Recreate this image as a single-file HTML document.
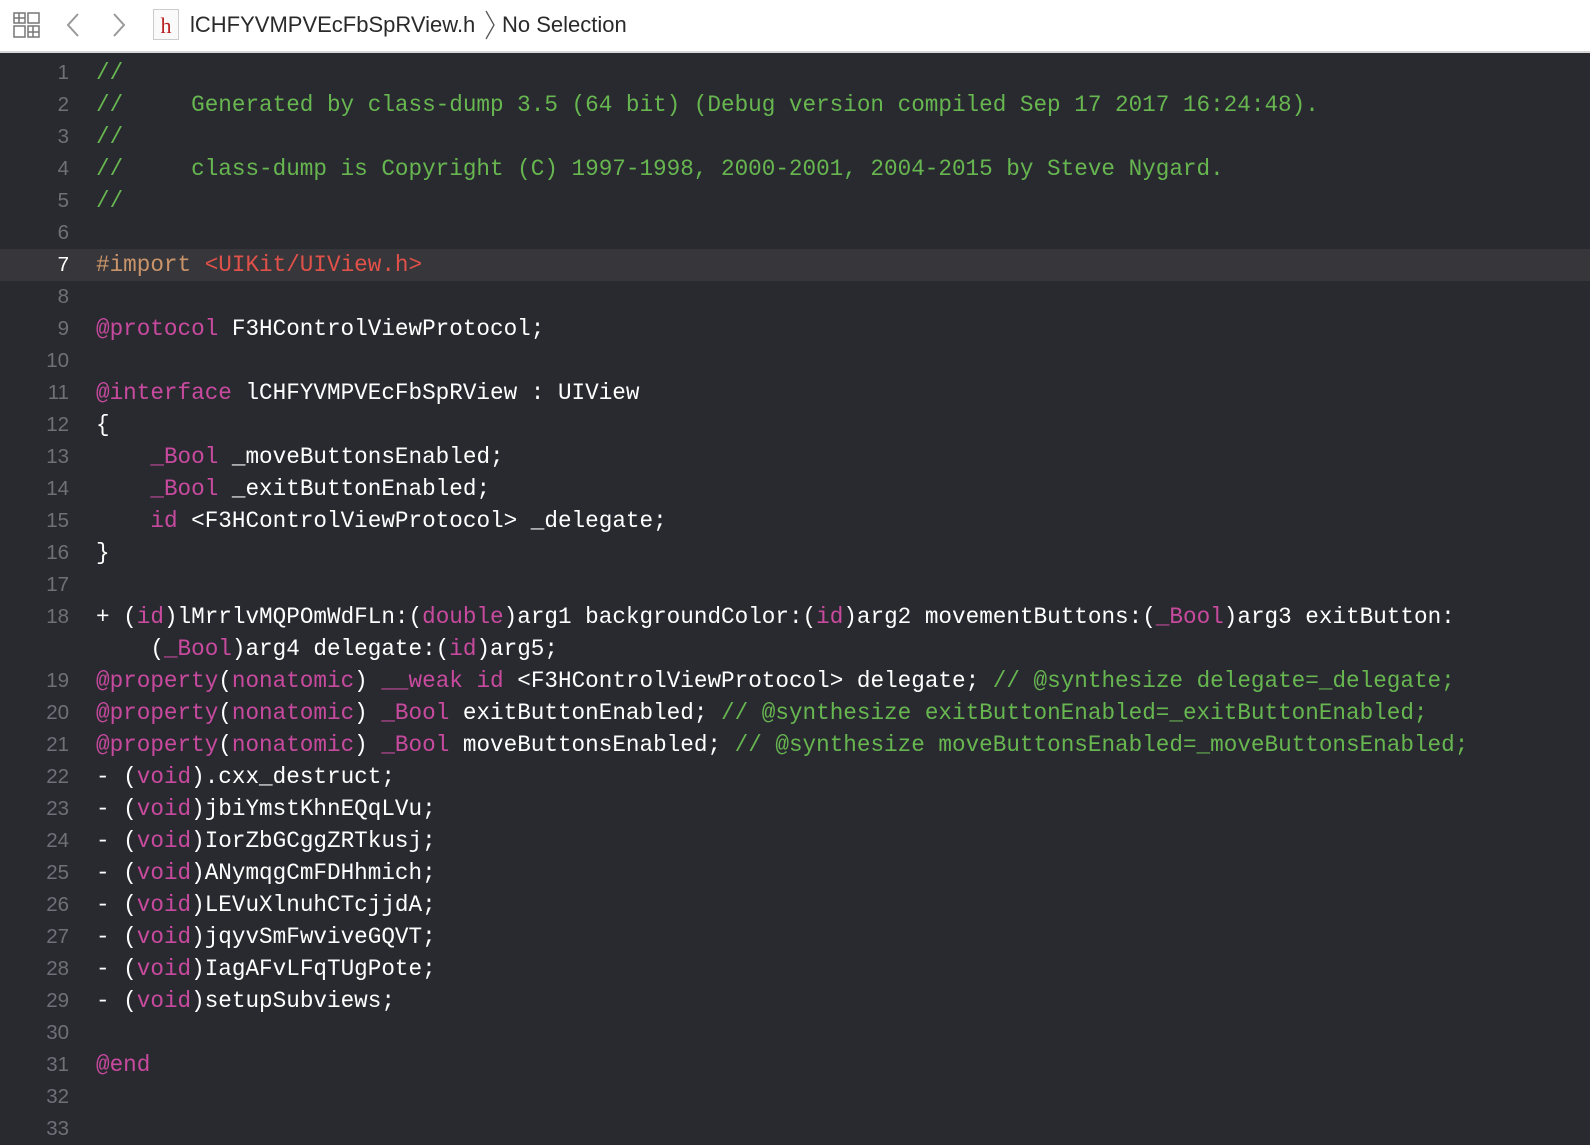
<!DOCTYPE html>
<html><head><meta charset="utf-8"><style>
*{margin:0;padding:0;box-sizing:border-box}
html,body{width:1590px;height:1144px;overflow:hidden}
body{background:#292a30;font-family:"Liberation Sans",sans-serif}
.top{position:absolute;left:0;top:0;width:1590px;height:53px;background:#fff;border-bottom:2px solid #d6d6d6}
.top .t{position:absolute;top:12px;font-size:22px;color:#2a2a2a;white-space:nowrap}
.code{position:absolute;left:0;top:57px;width:1590px;font-family:"Liberation Mono",monospace;font-size:22.65px;line-height:32px;color:#fff}
.l{position:relative;height:32px}
.l .n{position:absolute;left:0;width:69px;text-align:right;color:#6f7078;font-family:"Liberation Sans",sans-serif;font-size:20.5px}
.l .c{position:absolute;left:96px;white-space:pre}
.hl{background:#37363a}
.hl .n{color:#fff}
.k{color:#c84a9e}.g{color:#67b650}.p{color:#c9946a}.s{color:#e05149}
</style></head><body>
<div class="top">
<svg style="position:absolute;left:13px;top:12px" width="28" height="26" viewBox="0 0 28 26" fill="none" stroke="#777" stroke-width="1.5"><rect x="1" y="1" width="11" height="10"/><rect x="15" y="1" width="11" height="10"/><rect x="1" y="14" width="11" height="11"/><rect x="15" y="14" width="11" height="11"/><path d="M6 1v10M20 14v11M1 6h11M15 20h11"/></svg>
<svg style="position:absolute;left:65px;top:12px" width="16" height="26" viewBox="0 0 16 26" fill="none" stroke="#999" stroke-width="2"><path d="M13 2L3 13l10 11"/></svg>
<svg style="position:absolute;left:111px;top:12px" width="16" height="26" viewBox="0 0 16 26" fill="none" stroke="#999" stroke-width="2"><path d="M3 2l10 11L3 24"/></svg>
<div style="position:absolute;left:153px;top:9px;width:26px;height:31px;border:1px solid #ccc;background:#fafafa;font-family:'Liberation Serif',serif;color:#b22;font-size:22px;text-align:center;line-height:32px">h</div>
<div class="t" style="left:190px">lCHFYVMPVEcFbSpRView.h</div>
<svg style="position:absolute;left:484px;top:10px" width="12" height="30" viewBox="0 0 12 30" fill="none" stroke="#555" stroke-width="1.3"><path d="M2 1l8 14-8 14"/></svg>
<div class="t" style="left:502px">No Selection</div>
</div>
<div class="code"><div class="l"><span class="n">1</span><span class="c g">//</span></div><div class="l"><span class="n">2</span><span class="c g">//     Generated by class-dump 3.5 (64 bit) (Debug version compiled Sep 17 2017 16:24:48).</span></div><div class="l"><span class="n">3</span><span class="c g">//</span></div><div class="l"><span class="n">4</span><span class="c g">//     class-dump is Copyright (C) 1997-1998, 2000-2001, 2004-2015 by Steve Nygard.</span></div><div class="l"><span class="n">5</span><span class="c g">//</span></div><div class="l"><span class="n">6</span></div><div class="l hl"><span class="n">7</span><span class="c"><span class="p">#import </span><span class="s">&lt;UIKit/UIView.h&gt;</span></span></div><div class="l"><span class="n">8</span></div><div class="l"><span class="n">9</span><span class="c"><span class="k">@protocol</span> F3HControlViewProtocol;</span></div><div class="l"><span class="n">10</span></div><div class="l"><span class="n">11</span><span class="c"><span class="k">@interface</span> lCHFYVMPVEcFbSpRView : UIView</span></div><div class="l"><span class="n">12</span><span class="c">{</span></div><div class="l"><span class="n">13</span><span class="c">    <span class="k">_Bool</span> _moveButtonsEnabled;</span></div><div class="l"><span class="n">14</span><span class="c">    <span class="k">_Bool</span> _exitButtonEnabled;</span></div><div class="l"><span class="n">15</span><span class="c">    <span class="k">id</span> &lt;F3HControlViewProtocol&gt; _delegate;</span></div><div class="l"><span class="n">16</span><span class="c">}</span></div><div class="l"><span class="n">17</span></div><div class="l"><span class="n">18</span><span class="c">+ (<span class="k">id</span>)lMrrlvMQPOmWdFLn:(<span class="k">double</span>)arg1 backgroundColor:(<span class="k">id</span>)arg2 movementButtons:(<span class="k">_Bool</span>)arg3 exitButton:</span></div><div class="l"><span class="c">    (<span class="k">_Bool</span>)arg4 delegate:(<span class="k">id</span>)arg5;</span></div><div class="l"><span class="n">19</span><span class="c"><span class="k">@property</span>(<span class="k">nonatomic</span>) <span class="k">__weak</span> <span class="k">id</span> &lt;F3HControlViewProtocol&gt; delegate; <span class="g">// @synthesize delegate=_delegate;</span></span></div><div class="l"><span class="n">20</span><span class="c"><span class="k">@property</span>(<span class="k">nonatomic</span>) <span class="k">_Bool</span> exitButtonEnabled; <span class="g">// @synthesize exitButtonEnabled=_exitButtonEnabled;</span></span></div><div class="l"><span class="n">21</span><span class="c"><span class="k">@property</span>(<span class="k">nonatomic</span>) <span class="k">_Bool</span> moveButtonsEnabled; <span class="g">// @synthesize moveButtonsEnabled=_moveButtonsEnabled;</span></span></div><div class="l"><span class="n">22</span><span class="c">- (<span class="k">void</span>).cxx_destruct;</span></div><div class="l"><span class="n">23</span><span class="c">- (<span class="k">void</span>)jbiYmstKhnEQqLVu;</span></div><div class="l"><span class="n">24</span><span class="c">- (<span class="k">void</span>)IorZbGCggZRTkusj;</span></div><div class="l"><span class="n">25</span><span class="c">- (<span class="k">void</span>)ANymqgCmFDHhmich;</span></div><div class="l"><span class="n">26</span><span class="c">- (<span class="k">void</span>)LEVuXlnuhCTcjjdA;</span></div><div class="l"><span class="n">27</span><span class="c">- (<span class="k">void</span>)jqyvSmFwviveGQVT;</span></div><div class="l"><span class="n">28</span><span class="c">- (<span class="k">void</span>)IagAFvLFqTUgPote;</span></div><div class="l"><span class="n">29</span><span class="c">- (<span class="k">void</span>)setupSubviews;</span></div><div class="l"><span class="n">30</span></div><div class="l"><span class="n">31</span><span class="c"><span class="k">@end</span></span></div><div class="l"><span class="n">32</span></div><div class="l"><span class="n">33</span></div></div>
</body></html>
